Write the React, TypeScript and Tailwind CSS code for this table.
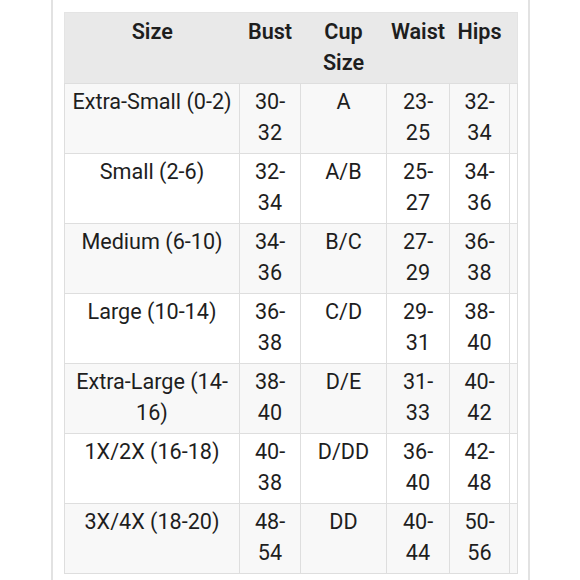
const headers = ['Size', 'Bust', 'Cup\nSize', 'Waist', 'Hips']

// size / bust / cup / waist / hips
const rows: string[][] = [
  ['Extra-Small (0-2)', '30-\n32', 'A', '23-\n25', '32-\n34'],
  ['Small (2-6)', '32-\n34', 'A/B', '25-\n27', '34-\n36'],
  ['Medium (6-10)', '34-\n36', 'B/C', '27-\n29', '36-\n38'],
  ['Large (10-14)', '36-\n38', 'C/D', '29-\n31', '38-\n40'],
  ['Extra-Large (14-\n16)', '38-\n40', 'D/E', '31-\n33', '40-\n42'],
  ['1X/2X (16-18)', '40-\n38', 'D/DD', '36-\n40', '42-\n48'],
  ['3X/4X (18-20)', '48-\n54', 'DD', '40-\n44', '50-\n56'],
]

const widths = ['w-[175px]', 'w-[61px]', 'w-[86px]', 'w-[63px]', 'w-[60px]']

export default function App() {
  return (
    <div className="w-[580px] h-[580px] bg-white overflow-hidden font-['Roboto',sans-serif] text-[#1e1e1e]">
      <div className="ml-[51px] w-[479px] h-full border-x-2 border-[#e2e2e2] pl-[11px] pt-[12px]">
        <table className="table-fixed border-collapse w-[453px] border border-[#e4e4e4] text-[21.6px] leading-[31px]">
          <colgroup>
            {widths.map((w) => (
              <col key={w} className={w} />
            ))}
            <col className="w-[8px]" />
          </colgroup>
          <thead>
            <tr className="h-[71px] bg-[#e9e9e9]">
              {headers.map((h) => (
                <th key={h} className="align-top pt-[3px] px-0 font-semibold whitespace-pre-line text-center">
                  {h}
                </th>
              ))}
              <th />
            </tr>
          </thead>
          <tbody>
            {rows.map((r, i) => (
              <tr key={r[0]} className={`h-[70px] ${i % 2 === 0 ? 'bg-[#f8f8f8]' : 'bg-white'}`}>
                {r.map((c, j) => (
                  <td
                    key={j}
                    className="align-top pt-[2px] px-[2px] text-center whitespace-pre-line border border-[#dedede] font-normal"
                  >
                    {c}
                  </td>
                ))}
                <td className="border border-[#dedede]" />
              </tr>
            ))}
          </tbody>
        </table>
      </div>
    </div>
  )
}
